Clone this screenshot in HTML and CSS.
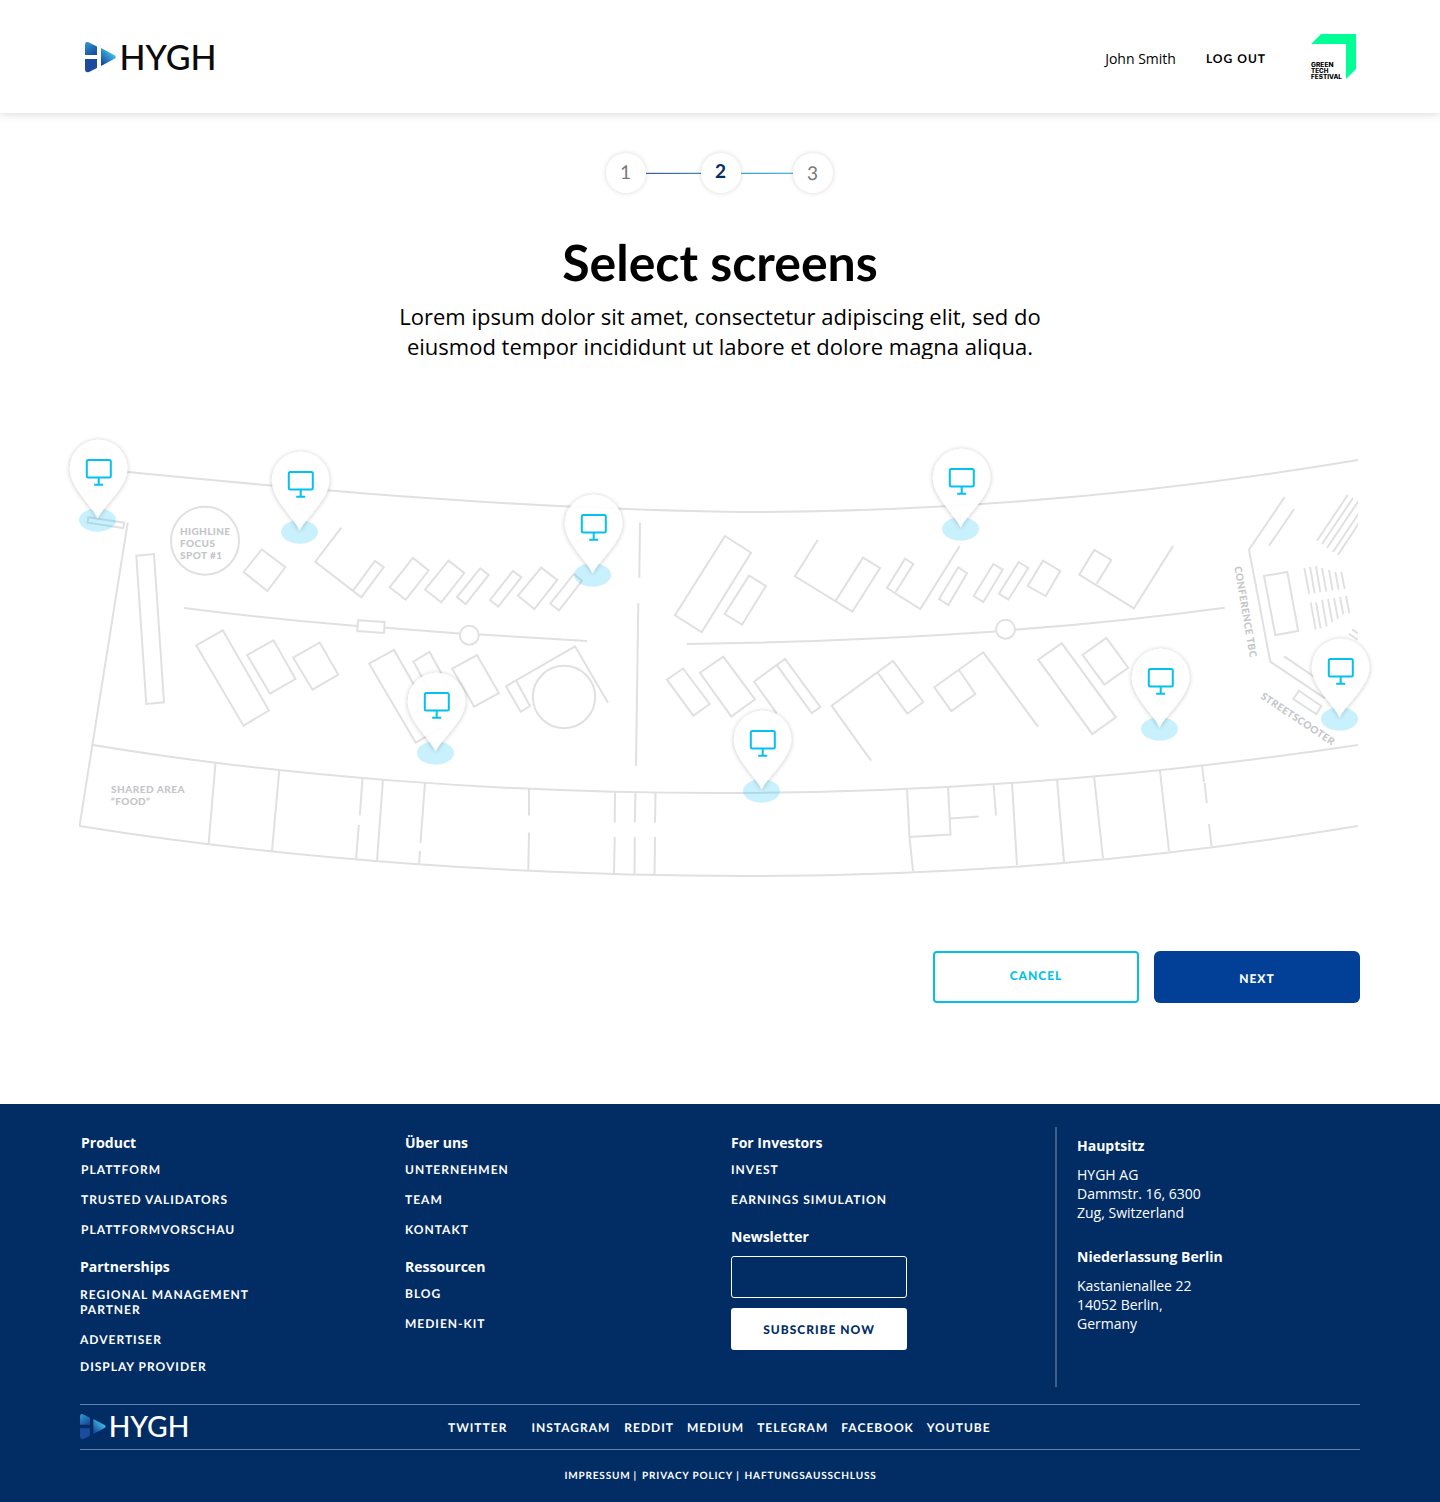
FILE: index.html
```html
<!DOCTYPE html>
<html lang="en">
<head>
<meta charset="utf-8">
<title>HYGH – Select screens</title>
<link rel="stylesheet" href="styles.css">
</head>
<body>
<header class="header">
  <svg class="logo" width="131" height="32" viewBox="0 0 131 32" role="img" aria-label="HYGH">
    <defs>
      <linearGradient id="g1" x1="0" y1="0" x2="0.6" y2="1"><stop offset="0" stop-color="#2f9bd0"/><stop offset="1" stop-color="#1a4f9f"/></linearGradient>
      <linearGradient id="g2" x1="0.7" y1="0.2" x2="0.1" y2="0.9"><stop offset="0" stop-color="#3fbfea"/><stop offset="1" stop-color="#17479b"/></linearGradient>
    </defs>
    <g id="mark">
      <path d="M0 14V4Q0 0 4 1.500L12 5.500V14Z" fill="url(#g1)"/>
      <path d="M0 18H12V27L4 31Q0 32 0 28Z" fill="#1a4b9c"/>
      <path d="M16 7L30 14.600Q31.800 16 30 17.400L16 25Z" fill="url(#g2)"/>
    </g>
    <text class="logo-text" x="34.500" y="29" textLength="97" lengthAdjust="spacingAndGlyphs">HYGH</text>
  </svg>
  <nav class="account">
    <span class="user">John Smith</span>
    <a class="logout">LOG OUT</a>
    <svg class="gtf" width="46" height="46" viewBox="0 0 46 46" role="img" aria-label="Green Tech Festival">
      <path d="M0 10L10 0H45V35L35 45V10Z" fill="#00ff94"/>
      <g class="gtf-text">
        <text x="0" y="33" textLength="22.500" lengthAdjust="spacingAndGlyphs">GREEN</text>
        <text x="0" y="39" textLength="17.500" lengthAdjust="spacingAndGlyphs">TECH</text>
        <text x="0" y="45" textLength="31" lengthAdjust="spacingAndGlyphs">FESTIVAL</text>
      </g>
    </svg>
  </nav>
</header>

<main class="main">
  <ol class="steps">
    <li class="step">1</li>
    <li class="line line-a"></li>
    <li class="step active">2</li>
    <li class="line line-b"></li>
    <li class="step last">3</li>
  </ol>
  <h1 class="title">Select screens</h1>
  <p class="lead">Lorem ipsum dolor sit amet, consectetur adipiscing elit, sed do<br>eiusmod tempor incididunt ut labore et dolore magna aliqua.</p>

  <svg class="map" width="1440" height="460" viewBox="0 430 1440 460">
    <defs>
      <clipPath id="bounds"><rect x="79" y="430" width="1279" height="460"/></clipPath>
      <filter id="shadow" x="-30%" y="-30%" width="160%" height="160%"><feDropShadow dx="0" dy="0.500" stdDeviation="2.500" flood-color="#000" flood-opacity="0.24"/></filter>
      <g id="pin">
        <ellipse cx="97.500" cy="520" rx="18.500" ry="11.700" fill="#00bff5" fill-opacity="0.21"/>
        <path d="M97.700 518.500C91 504.500 69.800 487 69.800 468.500A28.800 28.800 0 0 1 127.400 468.500C127.400 487 104.500 504.500 97.700 518.500Z" fill="#fff" opacity="0.96" filter="url(#shadow)"/>
        <g fill="none" stroke="#04c1f0" stroke-width="2">
          <rect x="86.800" y="460" width="24" height="17.500" rx="1.500"/>
          <path d="M98.700 477.500V484.500M94.200 484.700H103.200"/>
        </g>
      </g>
    </defs>
    <g class="plan" clip-path="url(#bounds)">
      <path d="M115 470L128 472C300 489 520 509 740 512C940 512 1150 495 1358 460"/>
      <path d="M93 745C280 776 500 793 720 793C930 793 1145 777 1358 745"/>
      <path d="M127.700 522.700L79.500 826C290 860 530 876 750 876C960 876 1150 860 1358 826"/>
      <path d="M215.500 763L208.500 845M279.300 770L272 851M362.600 777L359.800 815.500M358.800 825L356 860M383 779L377 861M425 782L420.500 843M420 851L419 864M529 788V815.500M529 832.500L528.300 870M615 792L614.700 822.500M614.700 837L614 874M635.500 792L634.800 822.500M634.800 837L634.500 874M655.500 793L655 822.500M655 837L654.500 875"/>
      <path d="M907 789L909.500 837L913 871M948 786L950.500 834.500L909.500 837M950 818.500L979 816.500M993.500 784L996 815.500M1012 783L1017 865M1057 779L1064 862M1094 776L1103 858M1160 771L1169 851M1202 765L1204 782M1204.600 783L1206.800 803M1209 824L1211.500 846"/>
      <path d="M88.300 517.300L124.300 522.700L123.300 528L87.700 522.700ZM136.300 555.700L154 554L164 702.300L146.300 704Z"/>
      <circle cx="205" cy="540.700" r="34"/>
      <path d="M261.700 549.300L285.300 567.300L267.300 591L243.700 572ZM341.300 527.700L315.300 561.700L361.300 597.300L383.700 567.300L375 561L353 590.700"/>
      <path d="M184 608Q270 619 357 626M385 627.700L459.500 633.500M479.300 634.500L587 641"/>
      <path d="M358 620.300L384.700 622L384 633L357.300 631Z"/>
      <circle cx="469.300" cy="635.300" r="9.500"/>
      <path d="M196.200 645.300L222.800 630.300L268.900 710.500L243.500 725.700ZM247.200 655L273.500 640.300L295.500 679L270 693.700ZM293.200 657.700L319.700 642.500L338.300 674.700L312.500 689.700Z"/>
      <path d="M389.600 587.300L412.900 558L428.700 570.500L405.700 599.700ZM425 589.700L448.500 560.600L464.300 573L441.300 602.400ZM457 597L480.200 568.300L488.700 574.900L465.700 604ZM490 600L512.900 571L521.300 577.200L498.300 606.700ZM518 595.700L541.200 567.600L557.300 579.900L534.300 609ZM550.300 603.700L573.900 574L582 580.900L559 610.400Z"/>
      <path d="M369.200 663.700L394 649.900L439.300 729L415.700 742.700ZM413.500 661.700L429.500 652L455 698L438.300 707.700ZM452.200 668.700L477 655L498.800 693L474.200 706.700Z"/>
      <path d="M608 702.700L575 646.300L506 686.300L520.700 711.700L530 706L516.300 681"/>
      <circle cx="564" cy="697" r="31.200"/>
      <path d="M640 522.700L639.300 577.700M638.300 603.300L636 765.700"/>
      <path d="M725 536L751 552.700L701.700 632L675 615.300ZM749 575.700L766 586L742 624.700L724.700 614Z"/>
      <path d="M817.700 540L795 576.300L852.300 611.700L880 568L863 557.700L835.700 600.700"/>
      <path d="M895.700 592L913.300 564L905 558.700L887 588L920.300 609L959.700 546"/>
      <path d="M958.300 567.300L967 573.300L948.300 605L939 599ZM993.300 564L1002.700 569.700L983.300 602L973.700 596ZM1018.700 562L1028.300 568L1008.300 599.700L999 593.700ZM1043 560.700L1060.300 571L1045.700 596L1027.700 586Z"/>
      <path d="M687 644Q845 642 995.500 631.500M1015 629.700Q1120 622 1224.700 607.700"/>
      <circle cx="1005.500" cy="629.300" r="9.500"/>
      <path d="M666.900 679.700L683 668.500L709.700 704L693.300 715.700ZM699.900 672.700L723.300 656.600L755 699.300L731.300 716.500ZM776.700 713.300L754 681.700L785 658.900L820.300 707L811.700 713L777 665.300"/>
      <path d="M871 760.700L831.600 705.700L893 660.900L923.300 702L907.300 713.700L877.700 672.700M1038 726.700L983.300 652.300L934.300 687.300L951.300 711L975.300 694L959 670"/>
      <path d="M1096.700 583.700L1111.300 560L1094.300 549.900L1079.200 574.700L1134 608.300L1173 546"/>
      <path d="M1061.700 643.200L1115.900 717.300L1092.300 734.100L1038.300 659.700ZM1106.300 637.900L1128.200 667.700L1104.300 684.500L1082.600 655Z"/>
      <path d="M1284.700 497L1249 549.700L1270.300 661.700L1325 698.300M1294 509.300L1269 545.700M1284 656.300L1322 682"/>
      <path d="M1264 576L1287.300 571.900L1298.200 631L1275.300 635ZM1299 690.700L1321.300 706L1316.300 714L1293.300 699Z"/>
      <path d="M1347.700 495L1317 540.700M1353 498L1322 544M1358.500 501L1327 548M1359 513L1333 552M1359 523L1338 554.700M1352 629.300L1358 633.300M1349 633.700L1358 640"/>
      <path class="seats" d="M1304.300 568L1309.300 593.700M1310 567L1314.700 593.300M1316 566L1320.300 592.300M1322 568L1326.300 591.700M1329 570L1332.700 590.700M1335.300 572L1338.700 589.700M1341.300 572L1344.700 589M1310.700 602.300L1315.700 629.700M1316 602.300L1320.700 628.300M1322 600L1326.700 626.300M1328 599L1332.300 622.300M1334 598L1338 619M1340 597L1343.300 614.300M1346 596L1349.300 613.300"/>
    </g>
    <g class="labels">
      <text x="180" y="535" textLength="50">HIGHLINE</text>
      <text x="180" y="547" textLength="35">FOCUS</text>
      <text x="180" y="559" textLength="42">SPOT #1</text>
      <text x="111" y="793" textLength="73.500">SHARED AREA</text>
      <text x="111" y="805" textLength="39">“FOOD”</text>
      <text transform="translate(1234.300 567) rotate(80.300)" textLength="92">CONFERENCE TBC</text>
      <text transform="translate(1260 698) rotate(33.500)" textLength="86">STREETSCOOTER</text>
    </g>
    <use href="#pin"/>
    <use href="#pin" x="202" y="12"/>
    <use href="#pin" x="495" y="55"/>
    <use href="#pin" x="338" y="233"/>
    <use href="#pin" x="664" y="271"/>
    <use href="#pin" x="863" y="9"/>
    <use href="#pin" x="1062" y="209"/>
    <use href="#pin" x="1242" y="199"/>
  </svg>

  <div class="actions">
    <button class="btn cancel">CANCEL</button>
    <button class="btn next">NEXT</button>
  </div>
</main>

<footer class="footer">
  <div class="columns">
    <div class="col">
      <div class="indent">
        <h2>Product</h2>
        <a>PLATTFORM</a>
        <a>TRUSTED VALIDATORS</a>
        <a>PLATTFORMVORSCHAU</a>
      </div>
      <h2>Partnerships</h2>
      <a class="wrap">REGIONAL MANAGEMENT PARTNER</a>
      <a>ADVERTISER</a>
      <a class="tight">DISPLAY PROVIDER</a>
    </div>
    <div class="col">
      <h2>Über uns</h2>
      <a>UNTERNEHMEN</a>
      <a>TEAM</a>
      <a>KONTAKT</a>
      <h2>Ressourcen</h2>
      <a>BLOG</a>
      <a>MEDIEN-KIT</a>
    </div>
    <div class="col">
      <h2>For Investors</h2>
      <a>INVEST</a>
      <a>EARNINGS SIMULATION</a>
      <h2>Newsletter</h2>
      <input class="email" type="email" aria-label="Newsletter">
      <button class="subscribe">SUBSCRIBE NOW</button>
    </div>
    <address class="address">
      <h2>Hauptsitz</h2>
      <p>HYGH AG<br>Dammstr. 16, 6300<br>Zug, Switzerland</p>
      <h2>Niederlassung Berlin</h2>
      <p>Kastanienallee 22<br>14052 Berlin,<br>Germany</p>
    </address>
  </div>
  <div class="bar">
    <svg class="footer-logo" width="109" height="27" viewBox="0 0 131 32" role="img" aria-label="HYGH">
      <use href="#mark"/>
      <text class="logo-text" x="34.500" y="29" textLength="97" lengthAdjust="spacingAndGlyphs">HYGH</text>
    </svg>
    <nav class="social">
      <a>TWITTER</a><a>INSTAGRAM</a><a>REDDIT</a><a>MEDIUM</a><a>TELEGRAM</a><a>FACEBOOK</a><a>YOUTUBE</a>
    </nav>
  </div>
  <nav class="legal"><a>IMPRESSUM</a><i>|</i><a>PRIVACY POLICY</a><i>|</i><a>HAFTUNGSAUSSCHLUSS</a></nav>
</footer>
</body>
</html>
```
FILE: styles.css
```css
* { box-sizing: border-box; }
body {
  margin: 0;
  background: #fff;
  color: #000;
  font-family: "Open Sans", sans-serif;
}
h1, h2, p, ol { margin: 0; padding: 0; }
.header {
  display: flex;
  justify-content: space-between;
  height: 113px;
  padding: 0 83px 0 85px;
  box-shadow: 0 0 10px rgba(0, 0, 0, 0.18);
}
.logo { margin-top: 41px; overflow: visible; }
.logo-text { font: 500 34px Lato, sans-serif; fill: #0b0b0b; }
.account { display: flex; height: 46px; margin-top: 34px; }
.user { font-size: 14px; line-height: 50px; margin-right: 30px; }
.logout, .btn, .col a, .subscribe, .social, .legal, .title, .step { text-rendering: geometricPrecision; }
.logout { font: bold 12px/50px Lato, sans-serif; letter-spacing: 1px; margin-right: 45px; }
.gtf { overflow: visible; }
.gtf-text { font: 800 6px Inter, sans-serif; }

.main { display: flex; flex-direction: column; height: 991px; }
.steps {
  display: flex;
  align-items: center;
  align-self: center;
  list-style: none;
  margin: 40px 2px 0 0;
}
.step {
  width: 40px;
  height: 40px;
  border-radius: 50%;
  box-shadow: 0 0 5px rgba(0, 0, 0, 0.16);
  text-align: center;
  font: 19px/39px Lato, sans-serif;
  color: #77787b;
}
.step.active { color: #022d64; font-weight: bold; line-height: 38px; }
.step.last { line-height: 41px; }
.line { height: 2px; }
.line-a { width: 55px; border-top: 1px solid #d3dfea; background: linear-gradient(90deg, #3a5a92, #3f87b5); }
.line-b { width: 52px; border-top: 1px solid #c5e6f3; background: linear-gradient(90deg, #3f9fca, #4fb8d9); }
.title {
  margin-top: 38px;
  text-align: center;
  font: bold 50px/62px Lato, sans-serif;
}
.lead {
  height: 58px;
  margin-top: 8px;
  overflow: hidden;
  text-align: center;
  font-size: 22px;
  line-height: 30px;
}
.map { display: block; flex: none; margin-top: 71px; }
.plan { fill: none; stroke: #e0e0e1; stroke-width: 2; }
.seats { stroke-width: 1.900; }
.labels { font: 900 10px Lato, sans-serif; fill: #c4c5c8; }
.actions {
  display: flex;
  justify-content: flex-end;
  gap: 15px;
  margin: 61px 80px 0 0;
}
.btn {
  width: 206px;
  height: 52px;
  padding: 0;
  border-radius: 4px;
  font: 900 12px/48px Lato, sans-serif;
  letter-spacing: 1px;
}
.cancel { border: 2px solid #04bfe8; background: #fff; color: #04c1e8; padding-bottom: 2px; line-height: 46px; }
.next { border: 0; background: #023f96; color: #fff; padding-top: 4px; border-radius: 6px; }

.footer {
  height: 398px;
  padding: 23px 80px 0;
  background: #022d64;
  color: #fff;
}
.columns { display: grid; grid-template-columns: 325px 326px 324px 305px; grid-template-rows: 260px; }
.col, .indent { display: flex; flex-direction: column; }
.indent { padding-left: 1px; }
.col h2, .address h2 { font: bold 14px/20px "Open Sans", sans-serif; }
.col h2 { margin: 6px 0 9px; }
.col a {
  font: bold 12px/15px Lato, sans-serif;
  letter-spacing: 1px;
  margin-bottom: 15px;
}
.col > a + h2, .indent + h2 { margin-top: 5px; }
.col .wrap { width: 180px; margin-top: 1px; }
.col .tight { margin-top: -3px; }
.email {
  width: 176px;
  height: 42px;
  border: 1px solid #fff;
  border-radius: 3px;
  background: none;
}
.subscribe {
  width: 176px;
  height: 42px;
  margin-top: 10px;
  border: 0;
  border-radius: 3px;
  background: #fff;
  color: #022d64;
  font: 900 12px Lato, sans-serif;
  letter-spacing: 1px;
}
.address {
  padding: 9px 0 0 20px;
  border-left: 2px solid #3f608a;
  font: 14px/19px "Open Sans", sans-serif;
}
.address p { margin: 9px 0 25px; }
.address p:last-child { margin-bottom: 0; }
.bar {
  display: flex;
  align-items: center;
  height: 46px;
  margin-top: 17px;
  border-top: 1px solid #6781a2;
  border-bottom: 1px solid #6781a2;
}
.footer-logo { overflow: visible; margin-top: -2px; }
.footer-logo .logo-text { fill: #fff; }
.social { display: flex; gap: 13px; margin-left: 259px; font: bold 12px/15px Lato, sans-serif; letter-spacing: 1px; }
.social a:first-child { margin-right: 11px; }
.social a:nth-child(2) { margin-right: 1px; }
.legal {
  display: flex;
  justify-content: center;
  gap: 5px;
  margin-top: 20px;
  padding-left: 1px;
  font: bold 10px/13px Lato, sans-serif;
  letter-spacing: 0.84px;
}
.legal i { font-style: normal; margin-left: -2px; }
```
